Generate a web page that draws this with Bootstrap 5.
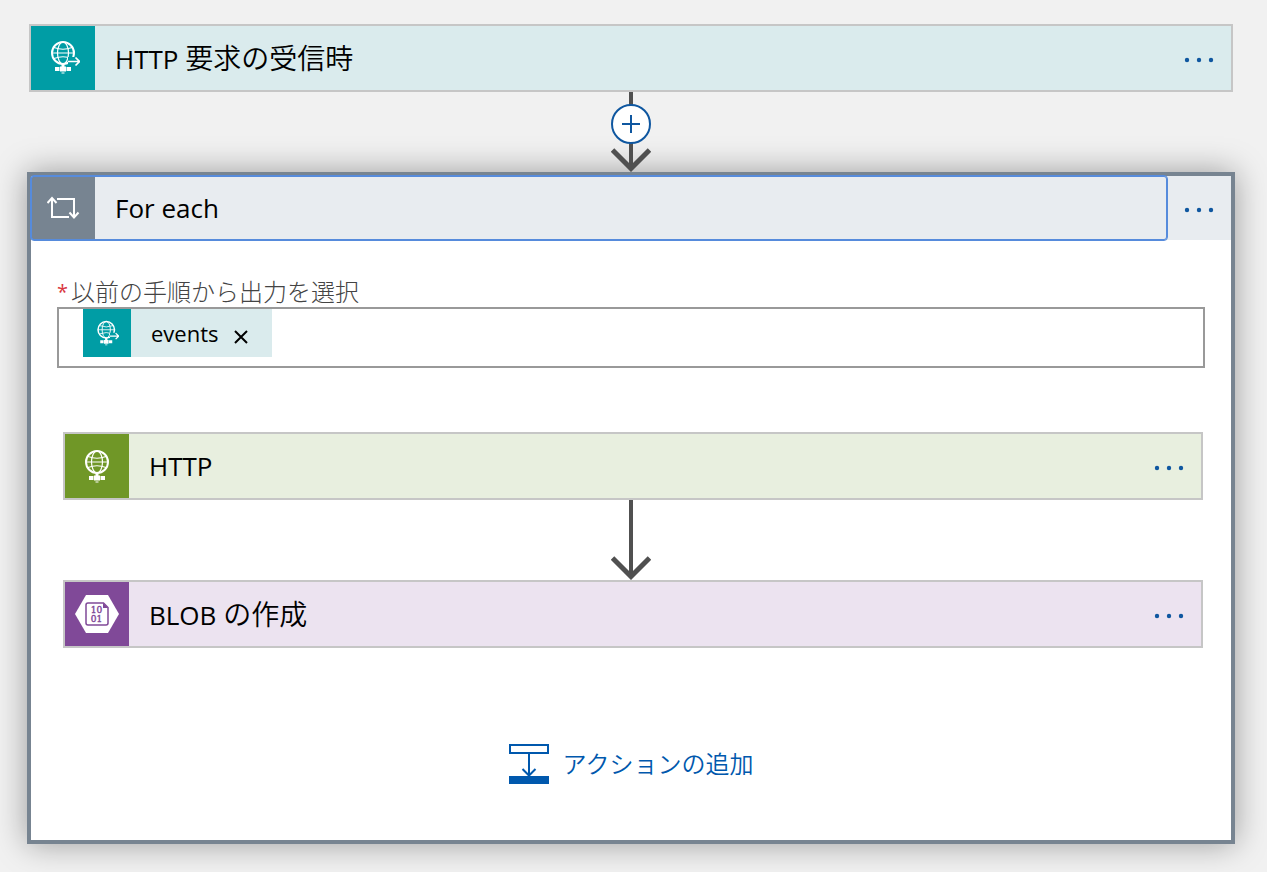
<!DOCTYPE html>
<html lang="ja">
<head>
<meta charset="utf-8">
<meta name="viewport" content="width=device-width, initial-scale=1">
<title>ロジック アプリ デザイナー</title>
<link href="https://cdn.jsdelivr.net/npm/bootstrap@5.3.0/dist/css/bootstrap.min.css" rel="stylesheet">
<style>
  body { background: #f1f1f1; color: #000; font-family: "Open Sans", "Noto Sans CJK JP", sans-serif; }
  .designer { padding: 24px 32px 28px 27px; }
  .step { border: 2px solid #c6c6c6; }
  .step-trigger { margin: 0 2px; background: #daebed; --tile: #009da5; }
  .step-http { margin: 0 28px 0 32px; background: #e8efdf; --tile: #709727; }
  .step-blob { margin: 0 28px 0 32px; background: #ece3f0; --tile: #804998; }
  .step-title { height: 64px; font-size: 26px; line-height: 64px; color: #000; }
  .jp { font-size: 28px; font-weight: 350; }
  .tile { width: 64px; height: 64px; margin-right: 20px; background: var(--tile); }
  .more { width: 64px; height: 64px; }
  .arrow { display: block; width: 40px; height: 80px; }
  .insert { top: 12px; width: 40px; height: 40px; }
  .loop { border: 4px solid #778491; box-shadow: 0 0 30px rgba(0, 0, 0, .36); --tile: #778491; }
  .loop-head { background: #e8ecf0; }
  .loop-title { border-radius: 3px; outline: 1px solid #568bdc; box-shadow: inset 0 0 0 1px #568bdc; }
  .loop-title .tile { border: 1px solid #568bdc; border-right: 0; border-radius: 3px 0 0 3px; }
  .picker { padding: 38px 26px 64px; }
  .picker label { font-size: 24px; font-weight: 300; line-height: 27px; margin-bottom: 2px; color: #444; }
  .picker .req { width: 14px; font-size: 20px; font-weight: 400; color: #d9363e; }
  .picker-box { height: 61px; border: 2px solid #999; padding-left: 24px; }
  .picker-box input { outline: 0; font-size: 22px; }
  .token { height: 48px; background: #daebed; font-size: 22px; --tile: #009da5; }
  .token .tile { width: 48px; height: 48px; }
  .token button { width: 26px; height: 26px; margin: 6px 18px 0 9px; }
  .add-row { padding: 94px 0 54px; }
  .add-action { gap: 14px; color: #0058ad; font-size: 24px; font-weight: 350; line-height: 44px; }
</style>
</head>
<body>
<svg class="d-none" aria-hidden="true">
  <symbol id="globe" viewBox="0 0 32 36">
    <g fill="none" stroke="#fff">
      <circle cx="16" cy="14" r="11" stroke-width="2"/>
      <ellipse cx="16" cy="14" rx="5.5" ry="11" stroke-width="1.2"/>
      <path d="M7 8.500Q16 12 25 8.500M5 14H27M7 19.500Q16 16 25 19.500" stroke-width="1.100"/>
      <path d="M16 25V29" stroke-width="3"/>
    </g>
    <path d="M8 28H12.500V32H8zM13 27.500H19V32.500H13zM19.500 28H24V32H19.500zM14.500 33.500H17.500V34.500H14.500z" fill="#fff"/>
  </symbol>
  <symbol id="globe-out" viewBox="0 0 32 36">
    <use href="#globe" x="-1" y="-1" width="32" height="36"/>
    <path d="M20 17H32V26H20z" fill="#009da5"/>
    <path d="M20 21.500H31M27.500 17.500L31.500 21.500L27.500 25.500" fill="none" stroke="#fff" stroke-width="1.700"/>
  </symbol>
  <symbol id="dots" viewBox="0 0 64 64">
    <g fill="#0f57a0"><circle cx="20" cy="34" r="2.200"/><circle cx="32" cy="34" r="2.200"/><circle cx="44" cy="34" r="2.200"/></g>
  </symbol>
  <symbol id="down" viewBox="0 0 40 80">
    <g fill="none" stroke="#505050"><path d="M20 0V76" stroke-width="4"/><path d="M1.500 58L20 76.500L38.500 58" stroke-width="5"/></g>
  </symbol>
</svg>

<main class="designer">
  <section class="step step-trigger d-flex">
    <button type="button" class="step-title btn border-0 rounded-0 p-0 d-flex flex-grow-1 text-start">
      <span class="tile d-flex"><svg class="m-auto" width="34" height="36" viewBox="-2 0 34 36"><use href="#globe-out" width="32" height="36"/></svg></span>
      <span>HTTP <span class="jp">要求の受信時</span></span>
    </button>
    <button type="button" class="more btn border-0 p-0 d-flex" aria-label="メニュー"><svg width="64" height="64"><use href="#dots"/></svg></button>
  </section>

  <div class="position-relative d-flex justify-content-center">
    <svg class="arrow"><use href="#down"/></svg>
    <button type="button" class="insert btn border-0 p-0 d-flex position-absolute" aria-label="ステップの挿入">
      <svg width="40" height="40" viewBox="0 0 40 40"><circle cx="20" cy="20" r="19" fill="#fff" stroke="#0f57a0" stroke-width="2"/><path d="M20 11V29M11 20H29" stroke="#0f57a0" stroke-width="2"/></svg>
    </button>
  </div>

  <section class="loop bg-white">
    <div class="loop-head d-flex">
      <button type="button" class="loop-title step-title btn border-0 p-0 d-flex flex-grow-1 text-start">
        <span class="tile d-flex"><svg class="m-auto" width="34" height="24" viewBox="1 0 34 24" fill="none" stroke="#fff" stroke-width="2"><path d="M6 2V21H23M1.500 7L6 2L10.500 7M11 3H28V21M23.500 16.500L28 21.500L32.500 16.500"/></svg></span>
        <span>For each</span>
      </button>
      <button type="button" class="more btn border-0 p-0 d-flex" aria-label="メニュー"><svg width="64" height="64"><use href="#dots"/></svg></button>
    </div>

    <div class="picker">
      <label for="source" class="d-flex"><span class="req">*</span>以前の手順から出力を選択</label>
      <div class="picker-box d-flex">
        <span class="token d-flex align-items-center">
          <span class="tile d-flex"><svg class="m-auto" width="24" height="27"><use href="#globe-out"/></svg></span>
          <span>events</span>
          <button type="button" class="btn border-0 p-0 d-flex" aria-label="削除"><svg class="m-auto" width="14" height="16" viewBox="0 -2 14 16"><path d="M1 1L13 13M13 1L1 13" stroke="#000" stroke-width="2"/></svg></button>
        </span>
        <input id="source" type="text" class="border-0 flex-grow-1 bg-transparent">
      </div>
    </div>

    <section class="step step-http d-flex">
      <button type="button" class="step-title btn border-0 rounded-0 p-0 d-flex flex-grow-1 text-start">
        <span class="tile d-flex"><svg class="m-auto" width="32" height="36"><use href="#globe"/></svg></span>
        <span>HTTP</span>
      </button>
      <button type="button" class="more btn border-0 p-0 d-flex" aria-label="メニュー"><svg width="64" height="64"><use href="#dots"/></svg></button>
    </section>

    <div class="d-flex justify-content-center"><svg class="arrow"><use href="#down"/></svg></div>

    <section class="step step-blob d-flex">
      <button type="button" class="step-title btn border-0 rounded-0 p-0 d-flex flex-grow-1 text-start">
        <span class="tile d-flex">
          <svg class="m-auto" width="46" height="40" viewBox="0 0 46 40">
            <path d="M12 1H34L45 20L34 39H12L1 20z" fill="#fff"/>
            <path d="M14 9H29.500L34 13.500V29Q34 31 32 31H14Q12 31 12 29V11Q12 9 14 9z" fill="none" stroke="#804998" stroke-width="1.500"/>
            <path d="M29 9V14H34z" fill="#804998"/>
            <g fill="#804998" font-family="DejaVu Serif, serif" font-size="9" text-anchor="middle" stroke="#804998" stroke-width=".4"><text x="22.500" y="19">10</text><text x="22.500" y="28">01</text></g>
          </svg>
        </span>
        <span>BLOB <span class="jp">の作成</span></span>
      </button>
      <button type="button" class="more btn border-0 p-0 d-flex" aria-label="メニュー"><svg width="64" height="64"><use href="#dots"/></svg></button>
    </section>

    <div class="add-row d-flex justify-content-center">
      <button type="button" class="add-action btn border-0 p-0 d-flex align-items-center">
        <svg width="40" height="40" viewBox="0 0 40 40" fill="none" stroke="#0058ad" stroke-width="2"><path d="M1 1H39V9H1zM20 9V31M13.500 25L20 31.500L26.500 25"/><path d="M0 32H40V40H0z" fill="#0058ad" stroke="none"/></svg>
        <span>アクションの追加</span>
      </button>
    </div>
  </section>
</main>
<script src="https://cdn.jsdelivr.net/npm/bootstrap@5.3.0/dist/js/bootstrap.bundle.min.js"></script>
</body>
</html>
